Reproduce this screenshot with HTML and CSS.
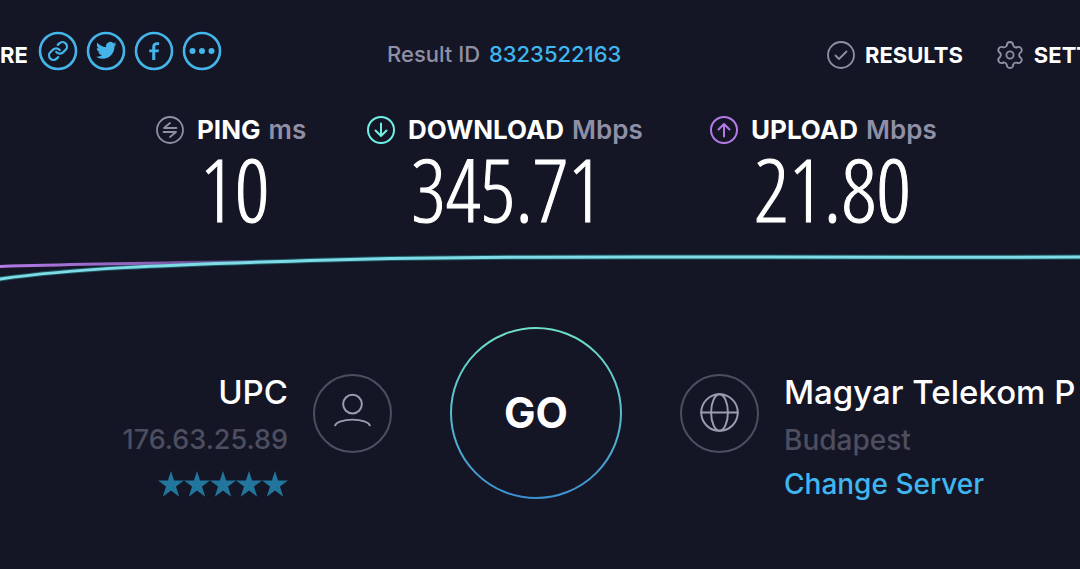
FILE: index.html
```html
<!DOCTYPE html>
<html lang="en">
<head>
<meta charset="utf-8">
<title>Speed test result</title>
<link rel="stylesheet" href="styles.css">
</head>
<body>
<header class="topbar">
  <div class="share">
    <span class="share-label">RE</span>
    <a class="share-link" href="#link" aria-label="Copy link">
      <svg viewBox="0 0 40 40"><circle class="ring" cx="20" cy="20" r="18"/><g class="thin" transform="translate(9.200 9.200) scale(.9)"><path d="M10 13a5 5 0 0 0 7.540.540l3-3a5 5 0 0 0-7.070-7.070l-1.720 1.710"/><path d="M14 11a5 5 0 0 0-7.540-.540l-3 3a5 5 0 0 0 7.070 7.070l1.710-1.710"/></g></svg>
    </a>
    <a class="share-link" href="#twitter" aria-label="Twitter">
      <svg viewBox="0 0 40 40"><circle class="ring" cx="20" cy="20" r="18"/><path class="solid" transform="translate(10 9) scale(.86)" d="M23.950 4.570a10 10 0 0 1-2.820.780 4.960 4.960 0 0 0 2.160-2.730c-.95.560-2 .960-3.130 1.190a4.920 4.920 0 0 0-8.380 4.480C7.690 8.100 4.070 6.130 1.640 3.160a4.820 4.820 0 0 0-.67 2.480c0 1.710.87 3.210 2.190 4.100a4.900 4.900 0 0 1-2.230-.620v.060a4.920 4.920 0 0 0 3.950 4.830 5 5 0 0 1-2.210.080 4.940 4.940 0 0 0 4.600 3.420A9.870 9.870 0 0 1 0 19.540a13.990 13.990 0 0 0 7.560 2.210c9.050 0 13.990-7.500 13.990-13.980 0-.210 0-.420-.020-.630a9.940 9.940 0 0 0 2.420-2.570z"/></svg>
    </a>
    <a class="share-link" href="#facebook" aria-label="Facebook">
      <svg viewBox="0 0 40 40"><circle class="ring" cx="20" cy="20" r="18"/><path class="solid" d="M18.200 29v-7.700h-3v-2.800h3v-2.600c0-3.200 1.900-4.700 4.700-4.700 1.100 0 1.900.1 2.200.1v2.800h-1.800c-1.600 0-2 .8-2 2v2.400h3.700l-.5 2.800h-3.200V29z"/></svg>
    </a>
    <a class="share-link" href="#more" aria-label="More">
      <svg viewBox="0 0 40 40"><circle class="ring" cx="20" cy="20" r="18"/><circle class="solid" cx="10.500" cy="20" r="3"/><circle class="solid" cx="20" cy="20" r="3"/><circle class="solid" cx="29.500" cy="20" r="3"/></svg>
    </a>
  </div>
  <div class="result">Result ID <a href="#result">8323522163</a></div>
  <nav class="menu">
    <a href="#results"><svg class="icon" viewBox="0 0 28 28"><circle cx="14" cy="14" r="13"/><path d="M8.500 14.500l3.500 3.500 7.500-7.500"/></svg>RESULTS</a>
    <a href="#settings"><svg class="icon" viewBox="0 0 28 28"><defs><path id="tooth" d="M10.700 4.500Q11 1 14 1T17.300 4.500Q18.400 6.800 20.600 6.500"/></defs><circle cx="14" cy="14" r="3.600"/><use href="#tooth"/><use href="#tooth" transform="rotate(60 14 14)"/><use href="#tooth" transform="rotate(120 14 14)"/><use href="#tooth" transform="rotate(180 14 14)"/><use href="#tooth" transform="rotate(240 14 14)"/><use href="#tooth" transform="rotate(300 14 14)"/></svg>SETT</a>
  </nav>
</header>
<main>
  <section class="stats">
    <div class="stat ping">
      <h2><svg class="icon" viewBox="0 0 28 28"><circle cx="14" cy="14" r="13"/><path d="M20.500 12H8l6-5M7.500 16H20l-6 5"/></svg>PING <small>ms</small></h2>
      <p class="value">10</p>
    </div>
    <div class="stat download">
      <h2><svg class="icon" viewBox="0 0 28 28"><circle cx="14" cy="14" r="13"/><path d="M14 7.500V20M8.500 14.500L14 20l5.500-5.500"/></svg>DOWNLOAD <small>Mbps</small></h2>
      <p class="value">345.71</p>
    </div>
    <div class="stat upload">
      <h2><svg class="icon" viewBox="0 0 28 28"><circle cx="14" cy="14" r="13"/><path d="M14 20.500V8M8.500 13.500L14 8l5.500 5.500"/></svg>UPLOAD <small>Mbps</small></h2>
      <p class="value">21.80</p>
    </div>
  </section>
  <svg class="graph" viewBox="0 0 1080 40" preserveAspectRatio="none" aria-hidden="true">
    <defs><linearGradient id="fade" gradientUnits="userSpaceOnUse" x1="0" y1="0" x2="300" y2="0"><stop offset="0" stop-color="#b57ae8"/><stop offset=".5" stop-color="#8a62b8"/><stop offset="1" stop-color="#8a62b8" stop-opacity="0"/></linearGradient></defs>
    <path class="glow" d="M0 29C70 19 150 15 330 10S720 8 1080 7"/>
    <path class="up" d="M0 16.500C100 13.500 200 12.500 300 11"/>
    <path class="down" d="M0 29C70 19 150 15 330 10S720 8 1080 7"/>
  </svg>
  <section class="connection">
    <div class="side client">
      <div class="info">
        <strong>UPC</strong>
        <span class="detail">176.63.25.89</span>
        <svg class="stars" viewBox="0 0 130 26" role="img" aria-label="5 stars"><defs><path id="star" d="M13 0l3.100 9.500H26l-8 6 3.200 10.200L13 19.500l-8.200 6.200L8 15.500l-8-6h9.900z"/></defs><use href="#star"/><use href="#star" x="26"/><use href="#star" x="52"/><use href="#star" x="78"/><use href="#star" x="104"/></svg>
      </div>
      <svg class="badge" viewBox="0 0 80 80"><circle class="edge" cx="40" cy="40" r="39"/><circle cx="40" cy="30.500" r="9.500"/><path d="M22.500 52c1-3 8-5.800 17.500-5.800S56.500 49 57.500 52"/></svg>
    </div>
    <button class="go" type="button">
      <svg viewBox="0 0 172 172" aria-hidden="true"><defs><linearGradient id="rim" x1="0" y1="0" x2="0" y2="1"><stop offset="0" stop-color="#6fe0c4"/><stop offset=".5" stop-color="#58bdd0"/><stop offset="1" stop-color="#3d8fd0"/></linearGradient></defs><circle cx="86" cy="86" r="85"/></svg>
      <span>GO</span>
    </button>
    <div class="side server">
      <svg class="badge" viewBox="0 0 80 80"><circle class="edge" cx="40" cy="40" r="39"/><circle cx="40" cy="39" r="18.500"/><ellipse cx="40" cy="39" rx="8.500" ry="18.500"/><path d="M21.500 39h37"/></svg>
      <div class="info">
        <strong>Magyar Telekom P</strong>
        <span class="detail">Budapest</span>
        <a href="#servers">Change Server</a>
      </div>
    </div>
  </section>
</main>
</body>
</html>
```
FILE: styles.css
```css
* { box-sizing: border-box; }
body {
  margin: 0;
  overflow: hidden;
  background: #141625;
  color: #fff;
  font-family: Inter, "Liberation Sans", sans-serif;
  white-space: nowrap;
}
a { color: #3fb6f0; text-decoration: none; }
svg { display: block; flex: none; fill: none; stroke-linecap: round; stroke-linejoin: round; }

.topbar {
  display: grid;
  grid-template-columns: 387fr 440fr 253fr;
  align-items: start;
  padding-top: 31px;
  font-size: 22px;
  line-height: 30px;
}
.topbar > * { min-width: 0; }
.share { display: flex; align-items: center; gap: 8px; }
.share-label { margin: 8px 2px 0 0; font-weight: 700; }
.share-link svg { width: 40px; height: 40px; }
.ring { stroke: #45b4e8; stroke-width: 2.6; }
.thin { stroke: #45b4e8; stroke-width: 2.5; }
.solid { fill: #45b4e8; }
.result { padding-top: 8px; color: #8f8fa6; font-weight: 500; }
.result a { margin-left: 3px; }
.menu { display: flex; gap: 33px; padding-top: 9px; }
.menu a { display: flex; align-items: center; gap: 10px; color: #fff; font-weight: 700; }
.icon { width: 28px; height: 28px; stroke: #8f8fa6; stroke-width: 1.8; }

.stats {
  display: grid;
  grid-template-columns: 156fr 211fr 343fr 370fr;
  padding-top: 45px;
}
.ping { grid-column-start: 2; }
.stat h2 {
  display: flex;
  align-items: center;
  gap: 8px;
  margin: 0;
  font-size: 26px;
  line-height: 28px;
  font-weight: 700;
}
.stat .icon { margin-right: 5px; }
.stat small { font-size: 26px; font-weight: 600; color: #8f8fa6; }
.download .icon { stroke: #6ff0e4; stroke-width: 2; }
.upload .icon { stroke: #b57ae8; stroke-width: 2; }
.value {
  margin: 0 0 0 44px;
  font-family: "Open Sans Condensed Light", "Open Sans Condensed", "Roboto Condensed", sans-serif;
  font-size: 87px;
  line-height: 88px;
  font-weight: 300;
  -webkit-text-stroke: 1px #fff;
}
.graph { width: 100%; height: 40px; margin-top: 18px; }
.up { stroke: url(#fade); stroke-width: 3; }
.down { stroke: #7fdce6; stroke-width: 3; }
.glow { stroke: #1c5560; stroke-width: 5; }

.connection { display: flex; align-items: center; gap: 58px; padding: 34px 8px 0 0; }
.side { flex: 1; min-width: 0; display: flex; align-items: center; gap: 25px; }
.client { justify-content: flex-end; }
.badge { width: 79px; height: 79px; stroke: #9c9cb0; stroke-width: 2; }
.edge { stroke: #4d4e5f; }
.info { display: flex; flex-direction: column; gap: 8px; padding-top: 48px; font-size: 27px; line-height: 36px; }
.info strong { margin-bottom: 2px; font-size: 33px; line-height: 40px; font-weight: 500; }
.info a { font-weight: 500; }
.client .info { align-items: flex-end; }
.server .info { font-size: 28px; }
.detail { color: #4d4e5f; font-weight: 500; }
.stars { width: 130px; height: 26px; margin: 5px 0; fill: #22769d; }
.go {
  display: grid;
  place-items: center;
  width: 172px;
  height: 172px;
  padding: 0;
  border: 0;
  border-radius: 50%;
  background: none;
  color: #fff;
  font: 700 42px/48px Inter, sans-serif;
}
.go svg, .go span { grid-area: 1 / 1; }
.go svg { width: 100%; height: 100%; stroke: url(#rim); stroke-width: 2; }
```
